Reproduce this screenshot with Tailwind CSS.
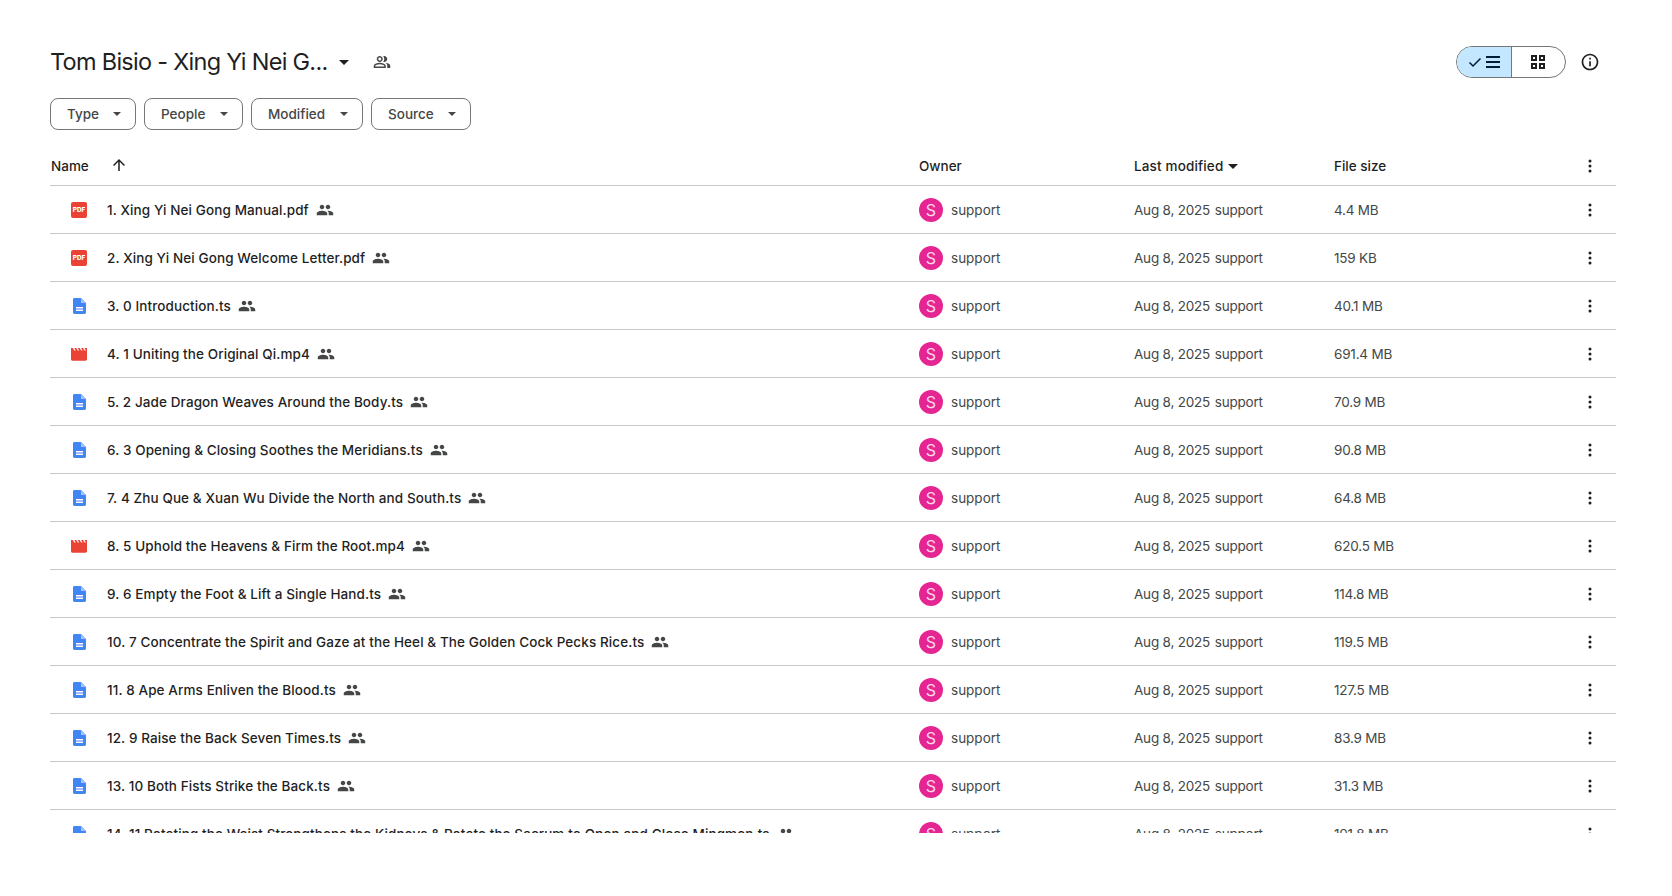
<!DOCTYPE html>
<html lang="en">
<head>
  <meta charset="UTF-8" />
  <title>Tom Bisio - Xing Yi Nei Gong</title>
  <script src="https://cdn.jsdelivr.net/npm/@tailwindcss/browser@4"></script>
</head>
<body class="h-screen overflow-hidden bg-white text-[#1f1f1f] font-[Inter,sans-serif] text-[13.5px]">
  <div class="pl-[50px] pr-[56px] pt-[46px]">
    <!-- title bar -->
    <div class="flex items-center h-[32px]">
      <h1 class="text-[23.5px] font-normal tracking-[-0.72px]">Tom Bisio - Xing Yi Nei G...</h1>
      <svg class="ml-[11px] w-[10px] h-[5px] fill-[#1f1f1f]" viewBox="0 0 10 5"><path d="M0 0h10L5 5z"/></svg>
      <svg class="ml-[24px] w-[18px] h-[18px] fill-[#444746]" viewBox="0 0 24 24"><path d="M16.67 13.13C18.04 14.06 19 15.32 19 17v3h4v-3c0-2.18-3.57-3.47-6.33-3.87zM9 12c2.21 0 4-1.79 4-4s-1.79-4-4-4-4 1.79-4 4 1.79 4 4 4zm0-6c1.1 0 2 .9 2 2s-.9 2-2 2-2-.9-2-2 .9-2 2-2zm6 6c2.21 0 4-1.79 4-4s-1.79-4-4-4c-.47 0-.91.1-1.33.24C14.5 5.27 15 6.58 15 8s-.5 2.73-1.33 3.76c.42.14.86.24 1.33.24zM9 13c-2.67 0-8 1.34-8 4v3h16v-3c0-2.66-5.33-4-8-4zm6 5H3v-.99C3.2 16.29 6.3 15 9 15s5.8 1.29 6 2z"/></svg>
      <div class="ml-auto flex items-center">
        <div class="flex w-[110px] h-[32px] rounded-full border border-[#747775] overflow-hidden">
          <div class="w-[55px] bg-[#c2e7ff] border-r border-[#747775] flex items-center justify-center gap-[4px]">
            <svg class="w-[14px] h-[14px] fill-none stroke-[#001d35] stroke-[1.5]" viewBox="0 0 14 14"><path d="M1.5 7.5l3.5 3.5 7.5-7.5"/></svg>
            <svg class="w-[14px] h-[12px] fill-[#001d35]" viewBox="0 0 14 12"><path d="M0 0h14v2H0zM0 5h14v2H0zM0 10h14v2H0z"/></svg>
          </div>
          <div class="flex-1 flex items-center justify-center pr-[2px]">
            <svg class="w-[14px] h-[14px] fill-none stroke-[#1f1f1f] stroke-[2]" viewBox="0 0 14 14"><path d="M1 1h4v4H1zM9 1h4v4H9zM1 9h4v4H1zM9 9h4v4H9z"/></svg>
          </div>
        </div>
        <svg class="ml-[14px] mr-[16px] w-[20px] h-[20px] fill-[#1f1f1f]" viewBox="0 0 24 24"><path d="M11 7h2v2h-2zm0 4h2v6h-2zm1-9C6.48 2 2 6.48 2 12s4.48 10 10 10 10-4.48 10-10S17.52 2 12 2zm0 18c-4.41 0-8-3.59-8-8s3.59-8 8-8 8 3.59 8 8-3.59 8-8 8z"/></svg>
      </div>
    </div>

    <!-- filter chips -->
    <div class="flex gap-[8px] mt-[20px] text-[#444746] font-medium">
      <button class="h-[32px] w-[86px] flex items-center justify-between pl-[16px] pr-[14px] rounded-[8px] border border-[#747775]">Type<svg class="w-[8px] h-[4px] fill-[#444746]" viewBox="0 0 8 4"><path d="M0 0h8L4 4z"/></svg></button>
      <button class="h-[32px] w-[99px] flex items-center justify-between pl-[16px] pr-[14px] rounded-[8px] border border-[#747775]">People<svg class="w-[8px] h-[4px] fill-[#444746]" viewBox="0 0 8 4"><path d="M0 0h8L4 4z"/></svg></button>
      <button class="h-[32px] w-[112px] flex items-center justify-between pl-[16px] pr-[14px] rounded-[8px] border border-[#747775]">Modified<svg class="w-[8px] h-[4px] fill-[#444746]" viewBox="0 0 8 4"><path d="M0 0h8L4 4z"/></svg></button>
      <button class="h-[32px] w-[100px] flex items-center justify-between pl-[16px] pr-[14px] rounded-[8px] border border-[#747775]">Source<svg class="w-[8px] h-[4px] fill-[#444746]" viewBox="0 0 8 4"><path d="M0 0h8L4 4z"/></svg></button>
    </div>

    <!-- file list -->
    <div class="h-[703px] overflow-hidden">
      <div class="grid grid-cols-[869px_215px_200px_1fr] items-center h-[56px] pt-[17px] border-b border-[#c7c7c7] font-medium">
        <div class="flex items-center pl-[1px]">Name
          <svg class="ml-[21px] w-[18px] h-[18px] fill-[#1f1f1f] -mt-[3px]" viewBox="0 0 24 24"><path d="M4 12l1.41 1.41L11 7.83V20h2V7.83l5.58 5.59L20 12l-8-8z"/></svg>
        </div>
        <div>Owner</div>
        <div class="flex items-center gap-[5px] tracking-[0.15px]">Last modified
          <svg class="w-[10px] h-[5px] fill-[#1f1f1f]" viewBox="0 0 10 5"><path d="M0 0h10L5 5z"/></svg>
        </div>
        <div class="flex items-center justify-between pr-[24px]">File size
          <svg class="w-[4px] h-[14px] fill-[#1f1f1f]" viewBox="0 0 4 14"><circle cx="2" cy="2" r="1.5"/><circle cx="2" cy="7" r="1.5"/><circle cx="2" cy="12" r="1.5"/></svg>
        </div>
      </div>
      <div id="rows"></div>
    </div>
  </div>

  <script>
    const files = [
      ['pdf', '1. Xing Yi Nei Gong Manual.pdf', '4.4 MB'],
      ['pdf', '2. Xing Yi Nei Gong Welcome Letter.pdf', '159 KB'],
      ['doc', '3. 0 Introduction.ts', '40.1 MB'],
      ['video', '4. 1 Uniting the Original Qi.mp4', '691.4 MB'],
      ['doc', '5. 2 Jade Dragon Weaves Around the Body.ts', '70.9 MB'],
      ['doc', '6. 3 Opening & Closing Soothes the Meridians.ts', '90.8 MB'],
      ['doc', '7. 4 Zhu Que & Xuan Wu Divide the North and South.ts', '64.8 MB'],
      ['video', '8. 5 Uphold the Heavens & Firm the Root.mp4', '620.5 MB'],
      ['doc', '9. 6 Empty the Foot & Lift a Single Hand.ts', '114.8 MB'],
      ['doc', '10. 7 Concentrate the Spirit and Gaze at the Heel & The Golden Cock Pecks Rice.ts', '119.5 MB'],
      ['doc', '11. 8 Ape Arms Enliven the Blood.ts', '127.5 MB'],
      ['doc', '12. 9 Raise the Back Seven Times.ts', '83.9 MB'],
      ['doc', '13. 10 Both Fists Strike the Back.ts', '31.3 MB'],
      ['doc', '14. 11 Rotating the Waist Strengthens the Kidneys & Rotate the Sacrum to Open and Close Mingmen.ts', '101.8 MB']
    ];

    const icons = {
      pdf: `<svg class="w-[16px] h-[16px]" viewBox="0 0 16 16"><rect width="16" height="16" rx="2" fill="#ea4335"/><text x="8" y="10.4" text-anchor="middle" font-family="Inter" font-weight="800" font-size="6.4" fill="#fff">PDF</text></svg>`,
      doc: `<svg class="w-[16px] h-[16px]" viewBox="0 0 16 16"><path d="M3.4 0h6.6L15 5v9.6a1.4 1.4 0 0 1-1.4 1.4H3.4A1.4 1.4 0 0 1 2 14.6V1.4A1.4 1.4 0 0 1 3.4 0z" fill="#4285f4"/><path d="M10 0L15 5H10z" fill="#a1c2fa"/><path d="M5 9h7v1.4H5zM5 11.6h7V13H5z" fill="#fff"/></svg>`,
      video: `<svg class="w-[16px] h-[16px]" viewBox="0 0 16 16"><path d="M0 2h1.8l1.6 2.6h1.4L3.2 2h2l1.6 2.6h1.4L6.6 2h2l1.6 2.6h1.4L10 2h2l1.6 2.6H15L13.4 2H16v11.3a1.4 1.4 0 0 1-1.4 1.4H1.4A1.4 1.4 0 0 1 0 13.3z" fill="#ea4335"/></svg>`
    };

    const shared = `<svg class="ml-[7px] w-[18px] h-[18px] fill-[#444746]" viewBox="0 0 24 24"><path d="M16 11c1.66 0 2.99-1.34 2.99-3S17.66 5 16 5c-1.66 0-3 1.34-3 3s1.34 3 3 3zm-8 0c1.66 0 2.99-1.34 2.99-3S9.66 5 8 5C6.34 5 5 6.34 5 8s1.34 3 3 3zm0 2c-2.33 0-7 1.17-7 3.5V19h14v-2.5c0-2.33-4.67-3.5-7-3.5zm8 0c-.29 0-.62.02-.97.05 1.16.84 1.97 1.97 1.97 3.45V19h6v-2.5c0-2.33-4.67-3.5-7-3.5z"/></svg>`;

    const rows = document.getElementById('rows');
    for (const [type, name, size] of files) {
      const row = document.createElement('div');
      row.className = 'grid grid-cols-[869px_215px_200px_1fr] items-center h-[48px] border-b border-[#c7c7c7] text-[#444746]';
      row.innerHTML = `
        <div class="flex items-center pl-[21px] text-[#1f1f1f]">
          ${icons[type]}
          <span class="ml-[20px] pt-[2px] font-medium tracking-[0.1px]">${name.replace(/&/g, '&amp;')}</span>
          ${shared}
        </div>
        <div class="flex items-center gap-[8px]">
          <span class="w-[24px] h-[24px] rounded-full bg-[#e52592] text-[#fbd5ea] text-[16px] flex items-center justify-center">S</span>
          <span class="pt-[2px]">support</span>
        </div>
        <div class="pt-[2px] tracking-[-0.2px]">Aug 8, 2025 <span class="ml-[1px]">support</span></div>
        <div class="flex items-center justify-between pr-[24px]">
          <span class="pt-[2px] tracking-[-0.2px]">${size}</span>
          <svg class="w-[4px] h-[14px] fill-[#1f1f1f]" viewBox="0 0 4 14"><circle cx="2" cy="2" r="1.5"/><circle cx="2" cy="7" r="1.5"/><circle cx="2" cy="12" r="1.5"/></svg>
        </div>`;
      rows.appendChild(row);
    }
  </script>
</body>
</html>
